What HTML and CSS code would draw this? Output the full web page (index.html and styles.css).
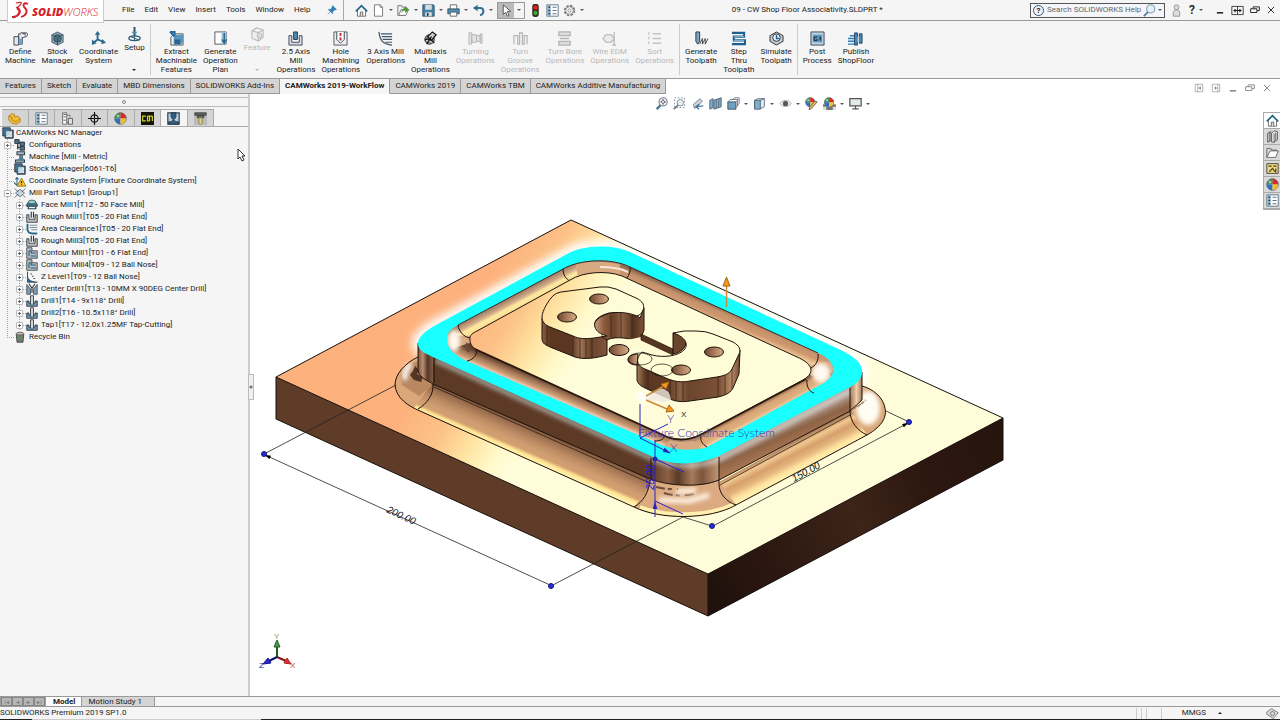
FILE: index.html
```html
<!DOCTYPE html>
<html lang="en">
<head>
  <meta charset="utf-8">
  <title>09 - CW Shop Floor Associativity.SLDPRT *</title>
  <link rel="stylesheet" href="styles.css">
</head>
<body>

<!-- icon sprite -->
<svg class="sprite" aria-hidden="true">
  <symbol id="i-home" viewBox="0 0 16 16"><path d="M3 8v7h10V8" fill="#fff" stroke="#555"/><path d="M1 9l7-7 7 7" fill="none" stroke="#1f6384" stroke-width="2"/><path d="M6.500 15v-5h3v5" fill="#ddd" stroke="#555"/></symbol>
  <symbol id="i-doc" viewBox="0 0 16 16"><path d="M3 1h7l3 3v11H3z" fill="#fff" stroke="#666"/><path d="M10 1v3h3" fill="none" stroke="#666"/></symbol>
  <symbol id="i-open" viewBox="0 0 16 16"><path d="M1 14V2h5l1 2h3v10z" fill="#eee" stroke="#666"/><path d="M2 14l3-7h9l-3 7z" fill="#fff" stroke="#666"/><path d="M5 11c1-4 3-6 5-6V2l5 5-5 4V8c-2 0-3 1-5 3z" fill="#4d9a34"/></symbol>
  <symbol id="i-save" viewBox="0 0 16 16"><path d="M1 1h13l1 1v13H1z" fill="#4482a5" stroke="#2c4a5c"/><path d="M4 1h8v6H4zM4 10h8v5H4z" fill="#d5dde1"/><path d="M6 11h2v4H6z" fill="#335"/></symbol>
  <symbol id="i-print" viewBox="0 0 16 16"><path d="M4 6V1h8v5" fill="#fff" stroke="#555"/><path d="M1 6h14v6H1z" fill="#4f8eb3" stroke="#2c4a5c"/><path d="M4 10h8v5H4z" fill="#fff" stroke="#555"/></symbol>
  <symbol id="i-undo" viewBox="0 0 16 16"><path d="M5 5h5c3 0 4 2 4 4s-1 4-4 5" fill="none" stroke="#356f96" stroke-width="2.500"/><path d="M1 5l6-4v8z" fill="#356f96"/></symbol>
  <symbol id="i-arrow" viewBox="0 0 16 16"><path d="M4 1v12l3-3 2 5 2-1-2-5h4z" fill="#fff" stroke="#444"/></symbol>
  <symbol id="i-traffic" viewBox="0 0 16 16"><rect x="4" y="0" width="8" height="16" rx="3" fill="#3b2620"/><circle cx="8" cy="4.500" r="2.700" fill="#d22"/><circle cx="8" cy="11" r="2.700" fill="#3a3"/></symbol>
  <symbol id="i-props" viewBox="0 0 16 16"><path d="M1 1h14v14H1z" fill="#fff" stroke="#4b6778"/><path d="M1 1h5v14H1z" fill="#9bb8c8"/><path d="M3 4h2M3 8h2M3 12h2" stroke="#245" stroke-width="2"/><path d="M8 4h5M8 8h5M8 12h5" stroke="#456"/></symbol>
  <symbol id="i-gear" viewBox="0 0 16 16"><circle cx="8" cy="8" r="6" fill="none" stroke="#777" stroke-width="2" stroke-dasharray="3 1.700"/><circle cx="8" cy="8" r="4.700" fill="#fff" stroke="#777"/><circle cx="8" cy="8" r="2" fill="#fff" stroke="#777"/></symbol>
  <symbol id="i-pin" viewBox="0 0 16 16"><path d="M9 1l6 6-2 1-2 0-2 3 0 3-7-7 3 0 3-2 0-2zM6 10l-5 5" fill="#2f7db5" stroke="#2f7db5"/></symbol>
  <symbol id="i-lens" viewBox="0 0 16 16"><circle cx="9.500" cy="6" r="5" fill="#e3f0fa" stroke="#5a8098"/><path d="M6 10l-5 5" stroke="#4f7a94" stroke-width="2"/></symbol>
  <symbol id="i-fit" viewBox="0 0 16 16"><path d="M7 10l-5 5" stroke="#4f7a94" stroke-width="3"/><circle cx="10" cy="6" r="5" fill="#f0f3f5" stroke="#556"/><path d="M10 2.500v7M6.500 6h7" stroke="#556"/><circle cx="10" cy="6" r="1.800" fill="#fff" stroke="#556"/></symbol>
  <symbol id="i-person" viewBox="0 0 16 16"><circle cx="8" cy="4" r="3" fill="#ddd" stroke="#888"/><path d="M4 15V11c0-5 8-5 8 0v4z" fill="#ddd" stroke="#888"/></symbol>
  <symbol id="i-min" viewBox="0 0 16 16"><path d="M3 12.500h10" stroke="currentColor" stroke-width="2.500"/></symbol>
  <symbol id="i-span" viewBox="0 0 16 16"><path d="M1 3h14v10H1zM8 3v10" fill="none" stroke="currentColor"/><path d="M3 8h10M5 6v4M11 6v4" stroke="currentColor" stroke-width="1.500"/></symbol>
  <symbol id="i-restore" viewBox="0 0 16 16"><path d="M5 6V3h10v6h-4M1 6h10v6H1z" fill="none" stroke="currentColor" stroke-width="1.500"/></symbol>
  <symbol id="i-close" viewBox="0 0 16 16"><path d="M3 3l10 10M13 3L3 13" stroke="currentColor" stroke-width="1.500"/></symbol>
  <symbol id="i-dockl" viewBox="0 0 16 16"><path d="M2 2h12v12H2zM6 2v12" fill="none" stroke="currentColor"/><path d="M11 5v6L7 8z" fill="currentColor"/></symbol>
  <symbol id="i-dockr" viewBox="0 0 16 16"><path d="M2 2h12v12H2zM11 2v12" fill="none" stroke="currentColor"/><path d="M6 5v6l4-3z" fill="currentColor"/></symbol>

  <symbol id="i-machine" viewBox="0 0 16 16"><path d="M1 6h5v9H1zM6 3h4v11H6z" fill="#dfe8ee" stroke="#445"/><path d="M8 2h6c2 0 2 3 0 4l-4 1M10 3h3v2" fill="#fff" stroke="#334"/><path d="M6 8h4v6H6z" fill="#6fa6c8"/></symbol>
  <symbol id="i-stock" viewBox="0 0 16 16"><path d="M8 1l6 3v8l-6 3-6-3V4z" fill="#8ba4b1" stroke="#4c6472"/><circle cx="8" cy="8" r="4" fill="#4f7286" stroke="#2e4757"/><path d="M2 4l6 3 6-3M8 7v8" fill="none" stroke="#35505f"/></symbol>
  <symbol id="i-coord" viewBox="0 0 16 16"><path d="M7 2v8M7 9l7 3M7 9l-5 4" stroke="#2d6a8f" stroke-width="2"/><path d="M4 4l3-4 3 4zM12 8.500l4 4-5 1.500zM1 9l0 6 5-2z" fill="#2d6a8f"/></symbol>
  <symbol id="i-setup" viewBox="0 0 16 16"><path d="M8 0v9" stroke="#345" stroke-width="2"/><path d="M5 5h6l-3 5z" fill="#4f8eb3"/><ellipse cx="8" cy="12" rx="6" ry="2.500" fill="none" stroke="#2d5a75" stroke-width="1.500"/><path d="M8 8v7M3 10l10 4" stroke="#2d5a75"/></symbol>
  <symbol id="i-extract" viewBox="0 0 16 16"><path d="M5 3h10v12H2V7z" fill="#eee" stroke="#555"/><path d="M5 7l3-3h7v8l-3 3H5z" fill="#5a95bc"/><path d="M1 1h5v5M6 6L1 1" fill="none" stroke="#2468a0" stroke-width="2"/><path d="M6 9h6v5H6z" fill="#2c6289"/></symbol>
  <symbol id="i-plan" viewBox="0 0 16 16"><path d="M2 1h12v13H2z" fill="#fff" stroke="#555"/><path d="M9 1h5v13H9z" fill="#9dc3dc"/><path d="M12 2v10M9.500 9l2.500 4 2.500-4" stroke="#246692" stroke-width="1.500" fill="none"/></symbol>
  <symbol id="i-feature" viewBox="0 0 16 16"><path d="M2 4l5-3 7 2v8l-5 4-7-3zM2 4l7 2 5-3M9 6v9" fill="#eee" stroke="#bbb" stroke-width="1.200"/><circle cx="10" cy="9" r="2.500" fill="#ddd" stroke="#bbb"/></symbol>
  <symbol id="i-mill" viewBox="0 0 16 16"><path d="M1 5v10h14V5h-3v7H4V5z" fill="#d3dde3" stroke="#445"/><path d="M6 1h4v8H6z" fill="#4f8eb3" stroke="#234"/></symbol>
  <symbol id="i-hole" viewBox="0 0 16 16"><path d="M1 1h14v14H1z" fill="#eee" stroke="#556"/><path d="M4 1v8l4 4 4-4V1" fill="#fff" stroke="#345"/><path d="M8 2v3M8 7v3" stroke="#c22" stroke-width="2"/></symbol>
  <symbol id="i-axis3" viewBox="0 0 16 16"><path d="M1 1v3c2 7 5 10 12 11h2V1z" fill="#f3f6f8"/><path d="M1 1c1 9 4 13 14 14M3 3h12M4 6h11M5 9h10M8 12h7" fill="none" stroke="#456" stroke-width="1.300"/></symbol>
  <symbol id="i-multi" viewBox="0 0 16 16"><circle cx="7" cy="9" r="5" fill="#999" stroke="#222"/><path d="M5 6l5-5 4 3-5 6zM2 10c3-3 8 0 10 3M4 14l5-8" fill="#ccc" stroke="#111" stroke-width="1.300"/></symbol>
  <symbol id="i-turn" viewBox="0 0 16 16"><path d="M1 2h3v12H1zM4 4h5v8H4zM9 5h4v6H9zM13 3h2v10h-2z" fill="#e4e4e4" stroke="#b4b4b4"/></symbol>
  <symbol id="i-groove" viewBox="0 0 16 16"><path d="M1 14V5h4v9h2V2h3v12h2V5h3v9" fill="none" stroke="#b4b4b4" stroke-width="1.300"/></symbol>
  <symbol id="i-bore" viewBox="0 0 16 16"><path d="M2 1h12v4H2zM2 11h12v4H2zM4 5h8M3 8h10" fill="#ddd" stroke="#b4b4b4" stroke-width="1.400"/></symbol>
  <symbol id="i-wire" viewBox="0 0 16 16"><path d="M1 8l3-4h6l3 4-3 4H4zM13 1v14M11 15h4" fill="#e9e9e9" stroke="#b4b4b4" stroke-width="1.200"/></symbol>
  <symbol id="i-sort" viewBox="0 0 16 16"><path d="M6 3h9M6 8h9M6 13h9" stroke="#c4c4c4" stroke-width="1.500"/><path d="M2 1v3M2 6v3M2 11v3" stroke="#b4b4b4"/></symbol>
  <symbol id="i-gentp" viewBox="0 0 16 16"><path d="M2 1h4v10l-2 3-2-3z" fill="#78a6c3" stroke="#334"/><path d="M6 14l3-6v6l3-6v6l3-6" fill="none" stroke="#444"/></symbol>
  <symbol id="i-step" viewBox="0 0 16 16"><path d="M1 2h13v4H3v4h12v4H1" fill="none" stroke="#1e5f93" stroke-width="2.200"/><path d="M3 6h11M3 10h11" stroke="#8cbedd"/></symbol>
  <symbol id="i-sim" viewBox="0 0 16 16"><path d="M8 1l7 4v6l-7 4-7-4V5z" fill="#bfc9cf" stroke="#333"/><circle cx="8" cy="7" r="4" fill="#e9f3f8" stroke="#333"/><path d="M8 4v4h3" fill="none" stroke="#1e5f93" stroke-width="1.500"/></symbol>
  <symbol id="i-post" viewBox="0 0 16 16"><path d="M1 1h14v14H1z" fill="#b9d2e0" stroke="#445"/><path d="M3 4h10v8H3z" fill="#5795bb"/><path d="M7.500 6.500h-3v3.500h3V8.500M10 7l1-.5V10" fill="none" stroke="#123"/></symbol>
  <symbol id="i-publish" viewBox="0 0 16 16"><path d="M0 8h7M0 11h7M0 14h7M2 5h5" stroke="#2d7fbd" stroke-width="1.500"/><path d="M7 2h3v13H7zM12 3h3v10h-3z" fill="#4889b5" stroke="#246"/><path d="M10 6h2v6h-2z" fill="#ccc"/></symbol>

  <symbol id="i-brush" viewBox="0 0 16 16"><path d="M3 9l8-7 3 3-6 7-4 2z" fill="#c9d2d8" stroke="#778"/><path d="M15 11l-8 1m3-3l-4 3 4 3" stroke="#39759b" stroke-width="1.500" fill="none"/></symbol>
  <symbol id="i-zoomarea" viewBox="0 0 16 16"><path d="M2 1h12v12H2z" fill="none" stroke="#777" stroke-dasharray="2 2"/><circle cx="9" cy="7" r="4" fill="#e9eff3" stroke="#68808f"/><path d="M6 10l-5 5" stroke="#68808f" stroke-width="2"/></symbol>
  <symbol id="i-section" viewBox="0 0 16 16"><path d="M1 4l4-2v11l-4 2zM6 4l9-3v11l-9 3z" fill="#82aec7" stroke="#456"/><path d="M9 3v11M12 2v11" stroke="#567"/></symbol>
  <symbol id="i-orient" viewBox="0 0 16 16"><path d="M6 4l3-3h6v7l-3 3" fill="#fff" stroke="#667"/><path d="M1 6h10v9H1z" fill="#6ca2c2" stroke="#345"/><path d="M1 6l3-3h9v8l-2 2M11 6l3-3" fill="none" stroke="#567"/></symbol>
  <symbol id="i-cube" viewBox="0 0 16 16"><path d="M2 4l4-2h8v10l-4 2H2z" fill="#dfe9ee" stroke="#567"/><path d="M2 4h7v11H2z" fill="#7fb0cc" stroke="#456"/><path d="M9 4l5-2" stroke="#456"/></symbol>
  <symbol id="i-eye" viewBox="0 0 16 16"><path d="M1 8c4-5 10-5 14 0-4 5-10 5-14 0z" fill="#f1f1f1" stroke="#999"/><circle cx="8" cy="8" r="3.200" fill="#555"/></symbol>
  <symbol id="i-ball" viewBox="0 0 16 16"><circle cx="8" cy="8" r="7" fill="#ddd" stroke="#444"/><path d="M8 8V1A7 7 0 0 0 1 8z" fill="#2f8a46"/><path d="M8 8V1a7 7 0 0 1 7 7z" fill="#d8282a"/><path d="M8 8H1a7 7 0 0 0 7 7z" fill="#2f6fc2"/><path d="M8 8h7a7 7 0 0 1-7 7z" fill="#edbd2b"/><circle cx="5" cy="5" r="2" fill="#fff" opacity=".5"/></symbol>
  <symbol id="i-edit" viewBox="0 0 16 16"><use href="#i-ball" width="13" height="13"/><path d="M15 6l-7 8-3 2 1-4 6-7z" fill="#e8c15c" stroke="#555"/></symbol>
  <symbol id="i-scene" viewBox="0 0 16 16"><path d="M0 9h16v7H0z" fill="#777"/><path d="M0 12h4v4H0zM12 12h4v4h-4zM4 9h4v3H4z" fill="#ddd"/><use href="#i-ball" x="1" width="13" height="13"/></symbol>
  <symbol id="i-monitor" viewBox="0 0 16 16"><path d="M1 2h14v9H1z" fill="#e3e8ea" stroke="#555" stroke-width="1.500"/><path d="M8 11v3M4 14.500h8" stroke="#555" stroke-width="1.500"/></symbol>

  <symbol id="i-part" viewBox="0 0 16 16"><path d="M1 5l4-3 3 1v3l4-1 3 3v4l-5 3-5-1-4-4z" fill="#f3bf3a" stroke="#a97a17"/><path d="M1 5l4 2v3l5 2 5-4" fill="none" stroke="#a97a17"/></symbol>
  <symbol id="i-config" viewBox="0 0 16 16"><path d="M2 1h5v14H2zM7 4h4v3M7 13h2" fill="#fff" stroke="#555"/><path d="M3 3h3M3 6h3M3 10h3" stroke="#333"/><rect x="9" y="8" width="5" height="7" fill="#dfe4e8" stroke="#555"/></symbol>
  <symbol id="i-target" viewBox="0 0 16 16"><circle cx="8" cy="8" r="4.500" fill="none" stroke="#111" stroke-width="1.400"/><path d="M8 0v16M0 8h16" stroke="#111" stroke-width="1.400"/></symbol>
  <symbol id="i-cw" viewBox="0 0 16 16"><path d="M0 0h16v16H0z" fill="#161608"/><path d="M6 5H2v6h4M8 5v6h2.500M10.500 5v6M14 11V5M8 5h6" fill="none" stroke="#cdd02c" stroke-width="1.500"/></symbol>
  <symbol id="i-nc" viewBox="0 0 16 16"><path d="M1 1h14v14H1z" fill="#b7d0e0" stroke="#345" stroke-width="1.500"/><path d="M5 1h6v5L9 9H7L5 6zM2 15v-3h3l2-2h2l2 2h3v3z" fill="#2f5f82" stroke="#234"/></symbol>
  <symbol id="i-tool" viewBox="0 0 16 16"><path d="M0 0h16v16H0z" fill="#bbb"/><path d="M1 1h14v3H1zM4 4h8v3H4z" fill="#666" stroke="#444"/><path d="M6 7h4v7l-2 2-2-2z" fill="#e4d46a" stroke="#775"/></symbol>

  <symbol id="t-root" viewBox="0 0 16 16"><path d="M1 1h10v3h4v11H4v-3H1z" fill="#3f7391" stroke="#223"/><path d="M5 5h9v9H5z" fill="#e6eff4" stroke="#345"/><path d="M6 12l6-6M6 9l3-3M9 13l4-4" stroke="#6fa0bb"/></symbol>
  <symbol id="t-conf" viewBox="0 0 16 16"><path d="M1 1h4v13M5 5h4M5 11h4" fill="none" stroke="#222" stroke-width="1.500"/><path d="M1 1h6v5H1zM8 4h6v5H8zM8 10h6v5H8z" fill="#4d7285" stroke="#223"/></symbol>
  <symbol id="t-mach" viewBox="0 0 16 16"><path d="M4 1h10v4H4zM8 5h3v5H8zM2 12h12v3H2z" fill="#a9bac4" stroke="#345" stroke-width="1.500"/><path d="M5 12l2-3h5l2 3z" fill="#4f7f9b"/></symbol>
  <symbol id="t-csys" viewBox="0 0 16 16"><path d="M4 14V3M4 3L2 6M4 3l2 3M4 14L0 10" fill="none" stroke="#346a8a" stroke-width="1.500"/><path d="M10 4l6 11H4z" fill="#f2c230" stroke="#8c6a10"/><path d="M10 8v3M10 12.500v1" stroke="#222" stroke-width="1.500"/></symbol>
  <symbol id="t-setup" viewBox="0 0 16 16"><path d="M8 3l6 5-6 5-6-5z" fill="#c8dbe6" stroke="#456"/><path d="M1 2l5 5M1 14l5-5M15 2l-5 5M15 14l-3-3" stroke="#345"/></symbol>
  <symbol id="t-face" viewBox="0 0 16 16"><path d="M2 5h12l1 5H1z" fill="#5e94b1" stroke="#245"/><ellipse cx="8" cy="4" rx="5" ry="2.500" fill="#9cc" stroke="#245"/><path d="M3 10v3h10v-3M0 8h16" fill="none" stroke="#245" stroke-width="1.500"/></symbol>
  <symbol id="t-rough" viewBox="0 0 16 16"><path d="M1 5v10h14V5h-3v6H4V5z" fill="#b9c0c4" stroke="#222"/><path d="M7 1v8M10 1v8" stroke="#234" stroke-width="1.500"/></symbol>
  <symbol id="t-area" viewBox="0 0 16 16"><path d="M2 1v7c0 5 3 6 7 6h6" fill="none" stroke="#2b698d" stroke-width="2.500"/><path d="M5 3h10M5 6h10M7 9h8" stroke="#567"/></symbol>
  <symbol id="t-contour" viewBox="0 0 16 16"><path d="M1 1h7v4h7v10H1z" fill="#b4c0c7" stroke="#333"/><path d="M4 5h3v3h6M4 12V5M6 12h8" fill="none" stroke="#2b5d79" stroke-width="1.500"/></symbol>
  <symbol id="t-z" viewBox="0 0 16 16"><path d="M2 1v6c1 5 4 7 13 8H2z" fill="#2b698d" stroke="#245"/><path d="M6 4h2M8 7h2M10 10h2" stroke="#345" stroke-width="1.500"/></symbol>
  <symbol id="t-cdrill" viewBox="0 0 16 16"><path d="M1 2l5 6v7H1zM15 2l-5 6v7h5z" fill="#7f9dae" stroke="#345"/><path d="M4 1l4 6 4-6M8 6v7" fill="none" stroke="#333" stroke-width="1.500"/></symbol>
  <symbol id="t-drill" viewBox="0 0 16 16"><path d="M1 8h3v3h8V8h3v7H1z" fill="#6f97ad" stroke="#123"/><path d="M6 1h4v11l-2 2-2-2z" fill="#cfd6da" stroke="#222"/></symbol>
  <symbol id="t-bin" viewBox="0 0 16 16"><path d="M3 4h10l-1 11H4z" fill="#777" stroke="#333"/><ellipse cx="8" cy="3.500" rx="5" ry="2" fill="#bbb" stroke="#444"/><path d="M5 8l3-2 1 4-3 2z" fill="#4d9b4d"/></symbol>

  <symbol id="i-library" viewBox="0 0 16 16"><path d="M2 4l4-2v11l-4 2zM7 4l3-3 4 1v10l-4 3H7z" fill="#f5f5f5" stroke="#444"/><path d="M4 3v11M10 4v11M12 3v10" stroke="#444"/></symbol>
  <symbol id="i-folder" viewBox="0 0 16 16"><path d="M1 14V3h5l1 2h6v2" fill="#ddd" stroke="#555"/><path d="M1 14l4-8h10l-3 8z" fill="#fff" stroke="#555"/></symbol>
  <symbol id="i-palette" viewBox="0 0 16 16"><path d="M1 2h14v12H1z" fill="#f0d77a" stroke="#333"/><path d="M3 5h4M9 5h4M4 12l4-4 3 4M12 8v5" stroke="#443" stroke-width="1.500" fill="none"/></symbol>
  <symbol id="i-tag" viewBox="0 0 16 16"><path d="M1 6l6-4 8 5-6 7-8-5z" fill="#ddd" stroke="#666"/><circle cx="8" cy="8" r="2.500" fill="none" stroke="#666"/></symbol>
</svg>

<header class="titlebar">
  <div class="logo">
    <svg class="logo-mark" viewBox="0 0 18 18" aria-hidden="true">
      <path d="M5 2c4-1 6-1 5 1-1 2-3 3-5 4 3-1 4 1 3 4-1 3-3 5-6 6" fill="none" stroke="#d4232b" stroke-width="1.200"/>
      <path d="M1 16c5 0 7-2 8-5 0-2-1-3-3-3M17 3c-4-2-6 1-3 4 3 3 2 7-4 9" fill="none" stroke="#d4232b" stroke-width="1.800"/>
    </svg>
    <span class="logo-text"><b>SOLID</b>WORKS</span>
  </div>
  <nav class="menu">
    <a href="#">File</a>
    <a href="#">Edit</a>
    <a href="#">View</a>
    <a href="#">Insert</a>
    <a href="#">Tools</a>
    <a href="#">Window</a>
    <a href="#">Help</a>
  </nav>
  <button class="pin" aria-label="Pin menu"><svg class="ico-s"><use href="#i-pin"/></svg></button>
  <div class="quick">
    <button aria-label="Home"><svg class="ico"><use href="#i-home"/></svg></button>
    <button class="drop" aria-label="New"><svg class="ico"><use href="#i-doc"/></svg></button>
    <button class="drop" aria-label="Open"><svg class="ico"><use href="#i-open"/></svg></button>
    <button class="drop" aria-label="Save"><svg class="ico"><use href="#i-save"/></svg></button>
    <button class="drop" aria-label="Print"><svg class="ico"><use href="#i-print"/></svg></button>
    <button class="drop" aria-label="Undo"><svg class="ico"><use href="#i-undo"/></svg></button>
    <button class="drop picked" aria-label="Select"><svg class="ico"><use href="#i-arrow"/></svg></button>
    <button aria-label="Rebuild"><svg class="ico"><use href="#i-traffic"/></svg></button>
    <button aria-label="File Properties"><svg class="ico"><use href="#i-props"/></svg></button>
    <button class="drop" aria-label="Options"><svg class="ico"><use href="#i-gear"/></svg></button>
  </div>
  <h1 class="doc-title">09 - CW Shop Floor Associativity.SLDPRT *</h1>
  <form class="search">
    <span class="help-dot">?</span>
    <input type="text" aria-label="Search help" placeholder="Search SOLIDWORKS Help">
    <button type="button" class="drop" aria-label="Search"><svg class="ico"><use href="#i-lens"/></svg></button>
  </form>
  <div class="window-tools">
    <button aria-label="Login"><svg class="ico"><use href="#i-person"/></svg></button>
    <button class="drop help">?</button>
    <button aria-label="Minimize"><svg class="ico-s"><use href="#i-min"/></svg></button>
    <button aria-label="Span displays"><svg class="ico"><use href="#i-span"/></svg></button>
    <button aria-label="Restore"><svg class="ico-s"><use href="#i-restore"/></svg></button>
    <button aria-label="Close"><svg class="ico-s"><use href="#i-close"/></svg></button>
  </div>
</header>

<div class="ribbon">
  <div class="group">
    <button><svg class="ico-l"><use href="#i-machine"/></svg>Define<br>Machine</button>
    <button><svg class="ico-l"><use href="#i-stock"/></svg>Stock<br>Manager</button>
    <button><svg class="ico-l"><use href="#i-coord"/></svg>Coordinate<br>System</button>
    <button class="split"><svg class="ico-l"><use href="#i-setup"/></svg>Setup</button>
  </div>
  <div class="group">
    <button><svg class="ico-l"><use href="#i-extract"/></svg>Extract<br>Machinable<br>Features</button>
    <button><svg class="ico-l"><use href="#i-plan"/></svg>Generate<br>Operation<br>Plan</button>
    <button class="split" disabled><svg class="ico-l"><use href="#i-feature"/></svg>Feature</button>
    <button><svg class="ico-l"><use href="#i-mill"/></svg>2.5 Axis<br>Mill<br>Operations</button>
    <button><svg class="ico-l"><use href="#i-hole"/></svg>Hole<br>Machining<br>Operations</button>
    <button><svg class="ico-l"><use href="#i-axis3"/></svg>3 Axis Mill<br>Operations</button>
    <button><svg class="ico-l"><use href="#i-multi"/></svg>Multiaxis<br>Mill<br>Operations</button>
    <button disabled><svg class="ico-l"><use href="#i-turn"/></svg>Turning<br>Operations</button>
    <button disabled><svg class="ico-l"><use href="#i-groove"/></svg>Turn<br>Groove<br>Operations</button>
    <button disabled><svg class="ico-l"><use href="#i-bore"/></svg>Turn Bore<br>Operations</button>
    <button disabled><svg class="ico-l"><use href="#i-wire"/></svg>Wire EDM<br>Operations</button>
    <button disabled><svg class="ico-l"><use href="#i-sort"/></svg>Sort<br>Operations</button>
  </div>
  <div class="group">
    <button><svg class="ico-l"><use href="#i-gentp"/></svg>Generate<br>Toolpath</button>
    <button><svg class="ico-l"><use href="#i-step"/></svg>Step<br>Thru<br>Toolpath</button>
    <button><svg class="ico-l"><use href="#i-sim"/></svg>Simulate<br>Toolpath</button>
  </div>
  <div class="group">
    <button><svg class="ico-l"><use href="#i-post"/></svg>Post<br>Process</button>
    <button><svg class="ico-l"><use href="#i-publish"/></svg>Publish<br>ShopFloor</button>
  </div>
</div>

<div class="tabrow">
  <nav class="tabs">
    <a href="#">Features</a>
    <a href="#">Sketch</a>
    <a href="#">Evaluate</a>
    <a href="#">MBD Dimensions</a>
    <a href="#">SOLIDWORKS Add-Ins</a>
    <a href="#" class="active">CAMWorks 2019-WorkFlow</a>
    <a href="#">CAMWorks 2019</a>
    <a href="#">CAMWorks TBM</a>
    <a href="#">CAMWorks Additive Manufacturing</a>
  </nav>
  <div class="doc-tools">
    <button aria-label="Dock left"><svg class="ico-s"><use href="#i-dockl"/></svg></button>
    <button aria-label="Dock right"><svg class="ico-s"><use href="#i-dockr"/></svg></button>
    <button aria-label="Minimize document"><svg class="ico-s"><use href="#i-min"/></svg></button>
    <button aria-label="Restore document"><svg class="ico-s"><use href="#i-restore"/></svg></button>
    <button aria-label="Close document"><svg class="ico-s"><use href="#i-close"/></svg></button>
  </div>
</div>

<main class="work">
  <aside class="panel">
    <div class="grip"><i></i></div>
    <div class="panel-tabs">
      <button aria-label="FeatureManager"><svg class="ico"><use href="#i-part"/></svg></button>
      <button aria-label="PropertyManager"><svg class="ico"><use href="#i-props"/></svg></button>
      <button aria-label="ConfigurationManager"><svg class="ico"><use href="#i-config"/></svg></button>
      <button aria-label="DimXpertManager"><svg class="ico"><use href="#i-target"/></svg></button>
      <button aria-label="DisplayManager"><svg class="ico"><use href="#i-ball"/></svg></button>
      <button aria-label="CAMWorks Feature Tree"><svg class="ico"><use href="#i-cw"/></svg></button>
      <button class="active" aria-label="CAMWorks Operation Tree"><svg class="ico"><use href="#i-nc"/></svg></button>
      <button aria-label="CAMWorks Tools Tree"><svg class="ico"><use href="#i-tool"/></svg></button>
    </div>

    <div class="root"><svg class="ico-t"><use href="#t-root"/></svg>CAMWorks NC Manager</div>
    <ul class="tree">
      <li><div class="row"><span class="twig"><button class="exp" aria-label="Expand"></button></span><svg class="ico-t"><use href="#t-conf"/></svg>Configurations</div></li>
      <li><div class="row"><span class="twig"></span><svg class="ico-t"><use href="#t-mach"/></svg>Machine [Mill - Metric]</div></li>
      <li><div class="row"><span class="twig"></span><svg class="ico-t"><use href="#t-root"/></svg>Stock Manager[6061-T6]</div></li>
      <li><div class="row"><span class="twig"></span><svg class="ico-t"><use href="#t-csys"/></svg>Coordinate System [Fixture Coordinate System]</div></li>
      <li>
        <div class="row"><span class="twig"><button class="exp open" aria-label="Collapse"></button></span><svg class="ico-t"><use href="#t-setup"/></svg>Mill Part Setup1 [Group1]</div>
        <ul>
          <li><div class="row"><span class="twig"><button class="exp" aria-label="Expand"></button></span><svg class="ico-t"><use href="#t-face"/></svg>Face Mill1[T12 - 50 Face Mill]</div></li>
          <li><div class="row"><span class="twig"><button class="exp" aria-label="Expand"></button></span><svg class="ico-t"><use href="#t-rough"/></svg>Rough Mill1[T05 - 20 Flat End]</div></li>
          <li><div class="row"><span class="twig"><button class="exp" aria-label="Expand"></button></span><svg class="ico-t"><use href="#t-area"/></svg>Area Clearance1[T05 - 20 Flat End]</div></li>
          <li><div class="row"><span class="twig"><button class="exp" aria-label="Expand"></button></span><svg class="ico-t"><use href="#t-rough"/></svg>Rough Mill3[T05 - 20 Flat End]</div></li>
          <li><div class="row"><span class="twig"><button class="exp" aria-label="Expand"></button></span><svg class="ico-t"><use href="#t-contour"/></svg>Contour Mill1[T01 - 6 Flat End]</div></li>
          <li><div class="row"><span class="twig"><button class="exp" aria-label="Expand"></button></span><svg class="ico-t"><use href="#t-contour"/></svg>Contour Mill4[T09 - 12 Ball Nose]</div></li>
          <li><div class="row"><span class="twig"><button class="exp" aria-label="Expand"></button></span><svg class="ico-t"><use href="#t-z"/></svg>Z Level1[T09 - 12 Ball Nose]</div></li>
          <li><div class="row"><span class="twig"><button class="exp" aria-label="Expand"></button></span><svg class="ico-t"><use href="#t-cdrill"/></svg>Center Drill1[T13 - 10MM X 90DEG Center Drill]</div></li>
          <li><div class="row"><span class="twig"><button class="exp" aria-label="Expand"></button></span><svg class="ico-t"><use href="#t-drill"/></svg>Drill1[T14 - 9x118° Drill]</div></li>
          <li><div class="row"><span class="twig"><button class="exp" aria-label="Expand"></button></span><svg class="ico-t"><use href="#t-drill"/></svg>Drill2[T16 - 10.5x118° Drill]</div></li>
          <li><div class="row"><span class="twig"><button class="exp" aria-label="Expand"></button></span><svg class="ico-t"><use href="#t-drill"/></svg>Tap1[T17 - 12.0x1.25MF Tap-Cutting]</div></li>
        </ul>
      </li>
      <li class="last"><div class="row"><span class="twig"></span><svg class="ico-t"><use href="#t-bin"/></svg>Recycle Bin</div></li>
    </ul>
    <svg class="pointer" viewBox="0 0 9 14" aria-hidden="true"><path d="M1 1v10l2-2 2 4 2-1-2-4h3z" fill="#fff" stroke="#333"/></svg>
    <button class="splitter" aria-label="Collapse panel"></button>
  </aside>

  <section class="viewport">
    <svg class="model" viewBox="250 94 1030 602" role="img" aria-label="Part model">
      <defs>
        <linearGradient id="g-top" gradientUnits="userSpaceOnUse" x1="470" y1="309" x2="570" y2="372">
          <stop offset="0" stop-color="#fdb27e"/><stop offset=".35" stop-color="#fcc287"/><stop offset=".6" stop-color="#ffe2a0"/><stop offset=".85" stop-color="#fff9ca"/><stop offset="1" stop-color="#fffdd9"/>
        </linearGradient>
        <linearGradient id="g-right" gradientUnits="userSpaceOnUse" x1="708" y1="590" x2="1003" y2="440">
          <stop offset="0" stop-color="#20110c"/><stop offset=".2" stop-color="#2c1710"/><stop offset=".5" stop-color="#3d2418"/><stop offset=".7" stop-color="#2e1911"/><stop offset="1" stop-color="#26140d"/>
        </linearGradient>
        <linearGradient id="g-skl" gradientUnits="userSpaceOnUse" x1="540" y1="430" x2="527" y2="460">
          <stop offset="0" stop-color="#74503a"/><stop offset=".12" stop-color="#96694a"/><stop offset=".4" stop-color="#bd8c64"/><stop offset=".6" stop-color="#cf9c70"/><stop offset=".75" stop-color="#d3a071"/><stop offset=".85" stop-color="#ffe391"/><stop offset="1" stop-color="#fff8bb"/>
        </linearGradient>
        <linearGradient id="g-skr" gradientUnits="userSpaceOnUse" x1="786" y1="445" x2="800" y2="472">
          <stop offset="0" stop-color="#a37452"/><stop offset=".2" stop-color="#f2c78f"/><stop offset=".4" stop-color="#d6a06e"/><stop offset=".6" stop-color="#e4b57d"/><stop offset=".8" stop-color="#ffe3a0"/><stop offset="1" stop-color="#fff4b6"/>
        </linearGradient>
        <linearGradient id="g-wallr" gradientUnits="userSpaceOnUse" x1="780" y1="424" x2="790" y2="446">
          <stop offset="0" stop-color="#b6a294"/><stop offset=".5" stop-color="#8d6346"/><stop offset="1" stop-color="#a97652"/>
        </linearGradient>
        <linearGradient id="g-corner" gradientUnits="userSpaceOnUse" x1="651" y1="0" x2="719" y2="0">
          <stop offset="0" stop-color="#5c3a25"/><stop offset=".25" stop-color="#8c6144"/><stop offset=".4" stop-color="#5a3926"/><stop offset=".6" stop-color="#a77a5b"/><stop offset=".75" stop-color="#7c553b"/><stop offset="1" stop-color="#c39773"/>
        </linearGradient>
        <linearGradient id="g-cl" gradientUnits="userSpaceOnUse" x1="418" y1="0" x2="434" y2="0">
          <stop offset="0" stop-color="#7d563c"/><stop offset=".3" stop-color="#b98e72"/><stop offset=".6" stop-color="#55382a"/><stop offset="1" stop-color="#8a6248"/>
        </linearGradient>
        <linearGradient id="g-cr" gradientUnits="userSpaceOnUse" x1="850" y1="0" x2="863" y2="0">
          <stop offset="0" stop-color="#9a6c4b"/><stop offset=".5" stop-color="#efcfab"/><stop offset="1" stop-color="#996a48"/>
        </linearGradient>
        <linearGradient id="g-in-ul" gradientUnits="userSpaceOnUse" x1="512" y1="296" x2="520" y2="311">
          <stop offset="0" stop-color="#9a7863"/><stop offset=".35" stop-color="#d2ab88"/><stop offset=".55" stop-color="#ffe9a0"/><stop offset="1" stop-color="#f7d78b"/>
        </linearGradient>
        <linearGradient id="g-in-ur" gradientUnits="userSpaceOnUse" x1="730" y1="311" x2="724" y2="325">
          <stop offset="0" stop-color="#84604b"/><stop offset=".3" stop-color="#c1906b"/><stop offset=".7" stop-color="#d09a6f"/><stop offset="1" stop-color="#edc493"/>
        </linearGradient>
        <linearGradient id="g-in-ll" gradientUnits="userSpaceOnUse" x1="570" y1="391" x2="564" y2="405">
          <stop offset="0" stop-color="#5b3d2b"/><stop offset=".3" stop-color="#9b7052"/><stop offset=".65" stop-color="#cf9d75"/><stop offset="1" stop-color="#fff0e6"/>
        </linearGradient>
        <linearGradient id="g-in-lr" gradientUnits="userSpaceOnUse" x1="752" y1="407" x2="760" y2="422">
          <stop offset="0" stop-color="#7d563b"/><stop offset=".25" stop-color="#d6a377"/><stop offset=".6" stop-color="#e0b07d"/><stop offset="1" stop-color="#fff3d5"/>
        </linearGradient>
        <linearGradient id="g-bite" gradientUnits="userSpaceOnUse" x1="594" y1="0" x2="644" y2="0">
          <stop offset="0" stop-color="#d0a283"/><stop offset=".2" stop-color="#8a5a3c"/><stop offset=".4" stop-color="#6b432b"/><stop offset=".55" stop-color="#8f6547"/><stop offset=".8" stop-color="#553220"/><stop offset="1" stop-color="#80563a"/>
        </linearGradient>
        <linearGradient id="g-isl" x1="0" x2="1">
          <stop offset="0" stop-color="#8d6144"/><stop offset=".12" stop-color="#5b3722"/><stop offset=".45" stop-color="#5b3722"/><stop offset=".6" stop-color="#9c7253"/><stop offset=".75" stop-color="#6a432b"/><stop offset="1" stop-color="#7d563c"/>
        </linearGradient>
        <linearGradient id="g-isr" x1="0" x2="1">
          <stop offset="0" stop-color="#a67b5a"/><stop offset=".08" stop-color="#5b3722"/><stop offset=".3" stop-color="#5f3b26"/><stop offset=".42" stop-color="#8c6244"/><stop offset=".5" stop-color="#6c452d"/><stop offset=".8" stop-color="#7b5236"/><stop offset=".92" stop-color="#b98d68"/><stop offset="1" stop-color="#6e4a33"/>
        </linearGradient>
        <linearGradient id="g-hole" x1="0" x2="1">
          <stop offset="0" stop-color="#6b442e"/><stop offset=".5" stop-color="#a77b5b"/><stop offset="1" stop-color="#d6ad89"/>
        </linearGradient>
        <filter id="f-glow" x="-10%" y="-10%" width="120%" height="120%"><feGaussianBlur stdDeviation="4"/></filter>
        <filter id="f-soft" x="-40%" y="-40%" width="180%" height="180%"><feGaussianBlur stdDeviation="2"/></filter>
        <marker id="m-arr" viewBox="0 0 10 6" refX="9" refY="3" markerWidth="8" markerHeight="5" orient="auto-start-reverse"><path d="M0 0l10 3-10 3z"/></marker>
        <marker id="m-blue" viewBox="0 0 10 6" refX="9" refY="3" markerWidth="8" markerHeight="5" orient="auto-start-reverse"><path d="M0 0l10 3-10 3z" fill="#2a24c4"/></marker>
        <path id="ring-out" d="M418 343C419 333 436 325 447 319L567 254C580 246 610 243 630 252L830 345C848 353 861 360 862 370C863 379 856 384 850 387L723 454C700 466 672 466 653 457L433 357C424 353 418 350 418 343z"/>
        <path id="ring-in" d="M447 339C447 332 452 328 458 325L563 269C578 260 610 257 630 267L818 353C834 360 839 373 825 382L707 447C690 452 670 450 655 442L467 361C456 356 447 349 447 339z"/>
        <clipPath id="c-in"><use href="#ring-in"/></clipPath>
      </defs>

      <!-- base block -->
      <path d="M571 220L1003 418L708 574L276 377z" fill="url(#g-top)"/>
      <path d="M276 377L708 574V616L276 419z" fill="#5e3c27"/>
      <path d="M708 574L1003 418V460L708 616z" fill="url(#g-right)"/>

      <!-- fillet skirt -->
      <path d="M418 357C405 363 395 374 395 385C396 398 408 406 420 411L634 507C660 520 710 520 736 505L867 435C883 426 887 416 885 408C883 397 873 389 862 386L850 411L719 484L651 480L433 384z" fill="#d9a778"/>
      <path d="M433 382L658 478L634 507L414 408z" fill="url(#g-skl)"/>
      <path d="M719 482L851 410L867 435L736 505z" fill="url(#g-skr)"/>
      <path d="M650 478C668 486 700 488 719 481L736 505C710 519 660 518 634 507C644 500 648 490 650 478z" fill="#dcaa80"/>
      <path d="M640 507C665 517 708 517 734 504" fill="none" stroke="#fff0ae" stroke-width="4"/>
      <path d="M656 487l10 2 12 0M664 493c8 3 20 3 30 1" fill="none" stroke="#6c4c38" stroke-width="2" stroke-dasharray="9 3 4 5"/>
      <path d="M659 500l30 1 20-6M676 492l20-2" fill="none" stroke="#fff5e8" stroke-width="5" filter="url(#f-soft)"/>
      <path d="M418 361C405 366 400 376 402 385L419 396L432 386L419 372z" fill="#b98861"/>
      <path d="M411 364c-4 4-7 10-6 16" fill="none" stroke="#fff" stroke-width="5" filter="url(#f-soft)"/>
      <path d="M415 366l4 4-2 4 6 3-2 5-7-2-4-5 3-4z" fill="#553626"/>
      <ellipse cx="868" cy="408" rx="12" ry="17" fill="#fffdf4" filter="url(#f-soft)"/>
      <path d="M853 409l7-4 6-5" stroke="#c0926a" stroke-width="2" stroke-dasharray="3 2"/>

      <!-- glow behind the selected face -->
      <use href="#ring-out" fill="none" stroke="#fff" stroke-width="12" filter="url(#f-glow)"/>

      <!-- boss walls -->
      <path d="M433 355L653 455V480L433 384z" fill="#5c3a25"/>
      <path d="M418 342V371C420 377 428 381 433 384V355z" fill="url(#g-cl)"/>
      <path d="M718 454L850 386V411L718 481z" fill="url(#g-wallr)"/>
      <path d="M850 386L862 372V400L850 411z" fill="url(#g-cr)"/>
      <path d="M651 455V479C668 486 700 488 719 481V454z" fill="url(#g-corner)"/>
      <path d="M435 360L653 459C672 468 700 468 722 458L851 391" fill="none" stroke="#e8f8ff" stroke-width="5" opacity=".5" filter="url(#f-soft)"/>
      <g fill="none" stroke="#1d120b">
        <path d="M418 343V371C420 378 428 381 433 384L650 479C668 486 700 488 719 480L850 411L862 400V372"/>
        <path d="M434 358V383M651 458V480M719 457V484M850 388V411"/>
        <path d="M434 387L652 484M720 485L850 415" stroke-width=".7"/>
        <path d="M418 357C405 363 395 374 395 385C396 398 408 406 420 411L634 507C660 520 710 520 736 505L867 435C883 426 887 416 885 408C883 397 873 389 862 386"/>
        <path d="M433 384C434 394 427 404 418 409M650 480C649 492 643 502 634 507M719 484C719 494 727 502 736 505M850 411C850 422 858 431 867 435"/>
      </g>

      <!-- selected face and pocket -->
      <use href="#ring-out" fill="#18ffff"/>
      <use href="#ring-in" fill="#d9aa82"/>
      <g clip-path="url(#c-in)">
        <path d="M440 335L575 262L578 277L472 336z" fill="url(#g-in-ul)"/>
        <path d="M620 262L835 360L808 366L620 275z" fill="url(#g-in-ur)"/>
        <path d="M440 352L470 343L672 438L660 450z" fill="url(#g-in-ll)"/>
        <path d="M690 438L808 374L832 384L705 452z" fill="url(#g-in-lr)"/>
        <path d="M563 267c20-9 48-9 70 0M663 436c12 6 28 6 40-1" fill="none" stroke="#a98570" stroke-width="3"/>
        <path d="M600 267c12 0 20 1 28 5" fill="none" stroke="#f9e6d8" stroke-width="2"/>
        <ellipse cx="454" cy="341" rx="6" ry="11" fill="#fff7ee" filter="url(#f-soft)"/>
        <path d="M467 342l4 8-3 3-4-6z" fill="#6b4a35"/>
        <ellipse cx="821" cy="373" rx="9" ry="10" fill="#fffaf2" filter="url(#f-soft)"/>
        <path d="M822 356c12 5 15 13 8 20" fill="none" stroke="#b79a85" stroke-width="2" stroke-dasharray="5 2"/>
      </g>
      <g fill="none" stroke="#1d120b">
        <path d="M458 325L563 269C578 260 610 257 630 267L818 353" stroke-width=".8"/>
        <path d="M563 269C563 275 566 279 570 281M630 267C631 272 628 277 626 279M458 325C459 332 464 337 470 338M467 361C474 360 478 353 476 350M818 354C819 361 815 366 811 368M807 380C806 387 810 392 814 393M655 441C662 441 665 438 664 435M707 447C702 444 700 440 701 436"/>
      </g>
      <path d="M470 340C469 335 473 333 477 331L570 280C583 272 606 270 622 276L797 357C811 363 817 372 803 380L700 435C688 441 674 441 663 435L477 350C472 347 470 344 470 340z" fill="url(#g-top)" stroke="#1d120b"/>
      <path d="M475 349L663 435C674 441 688 441 700 435L806 379" fill="none" stroke="#2c1a10" stroke-width="1.800"/>

      <!-- left island -->
      <path d="M542 318V338C542 344 546 345 550 347L575 357C585 360 596 358 607 355V336z" fill="url(#g-isl)" stroke="#1d120b"/>
      <path d="M594 325C596 316 610 312 620 312C630 312 636 314 640 318L644 308V330L641 338L633 340C624 337 612 337 607 340C600 336 594 332 594 325z" fill="url(#g-bite)" stroke="#1d120b"/>
      <path d="M608 341L632 339L641 337L672 352V357L650 353L628 345z" fill="#fffad2"/>
      <path d="M641 334L673 349V355L641 340z" fill="#573522" stroke="#1d120b" stroke-width=".7"/>
      <path d="M542 317C542 311 549 299 554 295Q556 293 561 292L600 287Q608 286 616 289L636 298C643 301 645 306 643 310C642 313 640 315 637 316C628 312 616 312 609 313C598 316 593 321 595 327C596 331 600 334 607 336L594 338C585 339 579 339 573 336L550 327C545 325 542 322 542 317z" fill="url(#g-top)" stroke="#1d120b"/>
      <path d="M547 325V345M573 337V356M580 339V358M586 339V359M592 339V358M602 334V337M611 315V337M621 313V337M632 315V338" stroke="#301d12" stroke-width=".7"/>

      <!-- right island -->
      <path d="M637 360V380C638 385 643 387 647 389L670 399C677 402 683 402 690 401L718 397C727 395 731 392 733 388L739 374L740 350z" fill="url(#g-isr)" stroke="#1d120b"/>
      <path d="M673 333V354C680 353 686 348 686 342C686 338 680 335 673 333z" fill="#6b442c" stroke="#1d120b"/>
      <path d="M673 333Q684 330 696 331Q706 331 713 334L733 342C740 346 741 350 739 354L732 369C729 375 722 376 717 377L690 381C680 383 674 381 668 379L645 369C638 366 634 360 642 352L652 355C664 358 678 356 684 350C690 343 683 336 673 333z" fill="#fffdd6" stroke="#1d120b"/>
      <path d="M648 370V389M670 380V399M676 382V401M683 382V402M718 377V397M725 375V395M732 369V389" stroke="#301d12" stroke-width=".7"/>
      <g stroke="#1d120b" fill="url(#g-hole)">
        <ellipse cx="599" cy="299" rx="9.500" ry="5"/>
        <ellipse cx="567" cy="317" rx="9.500" ry="5"/>
        <ellipse cx="619" cy="350" rx="10" ry="5.500"/>
        <ellipse cx="714" cy="352" rx="9.500" ry="5"/>
        <ellipse cx="681" cy="370" rx="9.500" ry="5"/>
        <path d="M638 354c-6 0-10 3-10 6 0 3 4 5 9 5z"/>
        <ellipse cx="640" cy="359" rx="12" ry="6" fill="none" stroke-width=".7"/>
        <ellipse cx="662" cy="370" rx="11" ry="6" fill="none" stroke-width=".7"/>
      </g>

      <!-- block edges -->
      <path d="M571 220L1003 418L708 574L276 377zM276 377V419L708 616V574M708 616L1003 460V418" fill="none" stroke="#16100c"/>

      <!-- dimensions -->
      <g stroke="#222" stroke-width=".8" fill="none">
        <path d="M264 454L396 385M551 586L683 517L712 526M886 411L909 422"/>
        <path d="M265 455L550 585M713 526L908 423" marker-start="url(#m-arr)" marker-end="url(#m-arr)"/>
      </g>
      <g fill="#2a28d8" stroke="#111a80"><circle cx="264" cy="454" r="2.500"/><circle cx="551" cy="586" r="2.500"/><circle cx="712" cy="526" r="2.500"/><circle cx="909" cy="422" r="2.500"/><circle cx="655" cy="459" r="2"/></g>
      <text class="dim" transform="translate(386 512) rotate(25)">200.00</text>
      <text class="dim" transform="translate(794 482) rotate(-28)">150.00</text>
      <g stroke="#2a24c4" fill="none">
        <path d="M655 440V457M655 517V502" marker-end="url(#m-blue)"/>
        <path d="M655 459V502M655 459L684 472M655 501L683 514"/>
        <path d="M640 437V404M640 438L668 424M640 438L670 453" marker-end="url(#m-blue)"/>
      </g>
      <text class="dim blue" transform="translate(654 490) rotate(-90)">25.00</text>

      <!-- csys markers -->
      <path d="M640 399L660 388Q670 389 671 400L664 402z" fill="#eee7e0" opacity=".8"/>
      <ellipse cx="642" cy="397" rx="6" ry="5" fill="#fff" filter="url(#f-soft)"/>
      <g stroke="#a8660e" fill="#f59a1e">
        <path d="M646 396L664 386M646 400L667 409M726.500 307V286" stroke="#c98a3c" stroke-width="1.500"/>
        <path d="M669 382L666 389L661 384zM674 411L666 412L669 405zM726.500 277L730 286H723z"/>
      </g>
      <text class="csys" x="638" y="437">Fixture Coordinate System</text>
      <text class="csys" x="667" y="423">Y</text>
      <text class="csys" x="670" y="452">X</text>
      <text class="axis" x="681" y="417">X</text>

      <!-- view triad -->
      <path d="M277 657V645" stroke="#1c5c1c" stroke-width="2"/><path d="M277 640l3 7h-6z" fill="#4c9b4c" stroke="#245c24"/>
      <path d="M277 657l9 4" stroke="#7c1414" stroke-width="2"/><path d="M291 664l-7-1 3-5z" fill="#e03030" stroke="#a22"/>
      <path d="M277 657l-8 4" stroke="#11116b" stroke-width="2"/><path d="M263 664l5-6 3 5z" fill="#2828d8" stroke="#118"/>
      <text class="axis green" x="274" y="639">Y</text>
      <text class="axis red" x="290" y="668">X</text>
      <text class="axis navy" x="259" y="668">Z</text>
    </svg>

    <div class="view-tools">
      <button aria-label="Zoom to fit"><svg class="ico"><use href="#i-fit"/></svg></button>
      <button aria-label="Zoom to area"><svg class="ico"><use href="#i-zoomarea"/></svg></button>
      <button aria-label="Previous view"><svg class="ico"><use href="#i-brush"/></svg></button>
      <button aria-label="Section view"><svg class="ico"><use href="#i-section"/></svg></button>
      <button class="drop" aria-label="View orientation"><svg class="ico"><use href="#i-orient"/></svg></button>
      <button class="drop" aria-label="Display style"><svg class="ico"><use href="#i-cube"/></svg></button>
      <button class="drop" aria-label="Hide or show items"><svg class="ico"><use href="#i-eye"/></svg></button>
      <button aria-label="Edit appearance"><svg class="ico"><use href="#i-edit"/></svg></button>
      <button class="drop" aria-label="Apply scene"><svg class="ico"><use href="#i-scene"/></svg></button>
      <button class="drop" aria-label="View settings"><svg class="ico"><use href="#i-monitor"/></svg></button>
    </div>

    <div class="task-pane">
      <button class="on" aria-label="Resources"><svg class="ico"><use href="#i-home"/></svg></button>
      <button aria-label="Design Library"><svg class="ico"><use href="#i-library"/></svg></button>
      <button aria-label="File Explorer"><svg class="ico"><use href="#i-folder"/></svg></button>
      <button aria-label="View Palette"><svg class="ico"><use href="#i-palette"/></svg></button>
      <button aria-label="Appearances"><svg class="ico"><use href="#i-ball"/></svg></button>
      <button aria-label="Custom Properties"><svg class="ico"><use href="#i-props"/></svg></button>
    </div>
  </section>
</main>

<nav class="sheets">
  <div class="pager">
    <button aria-label="First">|◂</button><button aria-label="Previous">◂</button><button aria-label="Next">▸</button><button aria-label="Last">▸|</button>
  </div>
  <a href="#" class="active">Model</a>
  <a href="#">Motion Study 1</a>
</nav>

<footer class="status">
  <span class="version">SOLIDWORKS Premium 2019 SP1.0</span>
  <i class="cell"></i><i class="cell"></i><i class="cell wide"></i>
  <button class="units">MMGS</button>
  <svg class="ico"><use href="#i-tag"/></svg>
</footer>
<div class="edge"></div>

</body>
</html>
```

FILE: styles.css
```css
* {
  box-sizing: border-box;
}
body {
  margin: 0;
  min-height: 100vh;
  display: flex;
  flex-direction: column;
  font: 8px/12px Roboto, "Open Sans", sans-serif;
  color: #222;
  background: #f5f5f5;
}
button {
  margin: 0;
  padding: 0;
  border: 0;
  background: none;
  font: inherit;
  color: inherit;
  cursor: pointer;
}
button:disabled {
  color: #b8b8b8;
}
a {
  color: inherit;
  text-decoration: none;
}
svg {
  display: block;
  flex: none;
}
.sprite {
  position: absolute;
  width: 0;
  height: 0;
}
.ico {
  width: 13px;
  height: 13px;
}
.ico-s {
  width: 10px;
  height: 10px;
}
.ico-l {
  width: 15px;
  height: 15px;
}
.ico-t {
  width: 12px;
  height: 12px;
}

/* small caret after a button */
.drop {
  display: flex;
  align-items: center;
  gap: 4px;
}
.drop::after {
  content: "";
  border: 2px solid transparent;
  border-top-color: #555;
  border-bottom: 0;
}

/* title bar */
.titlebar {
  display: flex;
  align-items: center;
  height: 21px;
  border-bottom: 1px solid #999;
}
.logo {
  align-self: flex-start;
  display: flex;
  align-items: center;
  gap: 3px;
  width: 97px;
  height: 23px;
  margin-left: 7px;
  padding: 0 0 3px 3px;
  background: #fff;
  border: 1px solid #ccc;
  border-top: 0;
  position: relative;
  z-index: 1;
}
.logo-mark {
  width: 18px;
  height: 18px;
}
.logo-text {
  font: italic 300 11px/18px "Open Sans", sans-serif;
  color: #d4232b;
  padding-top: 4px;
}
.logo-text b {
  font-weight: 800;
}
.menu {
  display: flex;
  gap: 10px;
  margin-left: 18px;
}
.pin {
  margin: 0 6px 0 17px;
}
.quick {
  display: flex;
  align-items: center;
  align-self: stretch;
  gap: 4px;
  padding-left: 11px;
  border-left: 1px solid #aaa;
}
.quick .picked {
  height: 17px;
  padding: 0 3px 0 2px;
  border: 1px solid #999;
  background: linear-gradient(90deg, #bbb 16px, #f5f5f5 16px);
}
.doc-title {
  margin: 0 auto;
  font-size: 8px;
  font-weight: 400;
}
.search {
  display: flex;
  align-items: center;
  width: 135px;
  height: 15px;
  padding: 0 2px;
  border: 1px solid #555;
  background: #f4f6fa;
}
.search input {
  flex: 1;
  min-width: 0;
  padding: 0 0 0 3px;
  border: 0;
  background: none;
  font: inherit;
}
.search input::placeholder {
  color: #666;
}
.search .drop {
  gap: 2px;
}
.help-dot {
  width: 11px;
  height: 11px;
  border: 1px solid #357;
  border-radius: 50%;
  text-align: center;
  font-weight: 700;
  line-height: 9px;
}
.window-tools {
  display: flex;
  align-items: center;
  gap: 6px;
  padding: 0 4px 0 5px;
}
.help {
  margin-right: 6px;
  font-size: 12px;
  font-weight: 600;
}

/* ribbon */
.ribbon {
  display: flex;
  height: 58px;
  padding: 3px 0;
  border-bottom: 1px solid #999;
}
.group {
  display: flex;
  align-items: flex-start;
  gap: 6px;
  padding: 0 5px;
  border-right: 1px solid #ccc;
}
.group:last-child {
  border-right: 0;
}
.group button {
  line-height: 9px;
  padding-top: 7px;
  text-align: center;
}
.group .ico-l {
  margin: 0 auto 1px;
}
.group .split {
  position: relative;
  padding-top: 3px;
  padding-bottom: 20px;
}
.split::after {
  content: "";
  position: absolute;
  left: calc(50% - 2px);
  bottom: 1px;
  border: 2px solid transparent;
  border-top-color: currentColor;
  border-bottom: 0;
}

/* command tabs */
.tabrow {
  display: flex;
  justify-content: space-between;
  background: #fff;
}
.tabs {
  display: flex;
}
.tabs a {
  height: 15px;
  padding: 1px 5px 0;
  border-right: 1px solid #999;
  border-bottom: 1px solid #999;
  background: #d4d4d4;
}
.tabs .active {
  border-bottom-color: #f5f5f5;
  background: #f5f5f5;
  font-weight: 700;
}
.doc-tools {
  display: flex;
  align-items: center;
  gap: 7px;
  padding: 3px 8px 0;
  color: #888;
}

/* manager panel */
.work {
  flex: 1;
  display: flex;
}
.panel {
  position: relative;
  width: 250px;
  border-right: 2px solid #ccc;
}
.grip {
  display: flex;
  align-items: center;
  justify-content: center;
  height: 10px;
  margin-top: 3px;
  border-top: 1px solid #bbb;
  border-bottom: 1px solid #bbb;
}
.grip i {
  width: 4px;
  height: 4px;
  border: 1px solid #888;
  border-radius: 50%;
}
.panel-tabs {
  display: flex;
  margin-top: 2px;
  padding: 0 34px 0 2px;
  border-bottom: 1px solid #aaa;
}
.panel-tabs button {
  flex: 1;
  display: flex;
  justify-content: center;
  align-items: center;
  height: 17px;
  border: 1px solid #aaa;
  border-left: 0;
  border-bottom: 0;
  background: #d4d4d4;
}
.panel-tabs .active {
  background: #f5f5f5;
}
.root {
  display: flex;
  gap: 2px;
  padding-left: 2px;
}
.tree,
.tree ul {
  margin: 0;
  padding: 0;
  list-style: none;
}
.tree {
  padding-left: 1px;
}
.tree ul {
  padding-left: 12px;
  background: repeating-linear-gradient(#aaa 0 1px, transparent 1px 2px) 6px 0 / 1px 100% no-repeat;
}
.row {
  display: flex;
  align-items: center;
  height: 12px;
  white-space: nowrap;
}
.row .ico-t {
  margin-right: 3px;
}
.twig {
  width: 13px;
  height: 12px;
  padding: 3px;
  background:
    repeating-linear-gradient(#aaa 0 1px, transparent 1px 2px) 6px 0 / 1px 100% no-repeat,
    repeating-linear-gradient(90deg, #aaa 0 1px, transparent 1px 2px) 6px 6px / 7px 1px no-repeat;
}
.last .twig {
  background-size: 1px 6px, 7px 1px;
}
.exp {
  display: block;
  width: 7px;
  height: 7px;
  border: 1px solid #bbb;
  border-radius: 1px;
  background:
    linear-gradient(#567, #567) 1px 2px / 3px 1px no-repeat,
    linear-gradient(#567, #567) 2px 1px / 1px 3px no-repeat,
    #fff;
}
.exp.open {
  background: linear-gradient(#567, #567) 1px 2px / 3px 1px no-repeat, #fff;
}
.pointer {
  position: absolute;
  top: 54px;
  left: 237px;
  width: 9px;
  height: 14px;
}
.splitter {
  position: absolute;
  z-index: 1;
  top: 280px;
  right: -6px;
  width: 6px;
  height: 26px;
  border: 1px solid #bbb;
  background: radial-gradient(circle, #777 1px, #f0f0f0 2px);
}

/* graphics area */
.viewport {
  flex: 1;
  display: flex;
  min-width: 0;
  position: relative;
  background: #fff;
}
.model {
  flex: 1;
  width: 100%;
  min-width: 0;
}
.dim {
  font: italic 10px "Liberation Sans", sans-serif;
  fill: #111;
}
.csys {
  font: 300 12px Lato, sans-serif;
  fill: #4037b8;
}
.axis {
  font: 8px "Liberation Sans", sans-serif;
  fill: #222;
}
.blue {
  fill: #2018e0;
}
.green {
  fill: #7a9c7a;
}
.red {
  fill: #c44;
}
.navy {
  fill: #229;
}
.view-tools {
  position: absolute;
  top: 3px;
  left: 0;
  right: 5px;
  display: flex;
  align-items: center;
  justify-content: center;
  gap: 5px;
}
.task-pane {
  position: absolute;
  top: 18px;
  right: 0;
  display: flex;
  flex-direction: column;
  border: 1px solid #aaa;
  border-right: 0;
}
.task-pane button {
  display: flex;
  align-items: center;
  justify-content: center;
  width: 16px;
  height: 16px;
  border-bottom: 1px solid #aaa;
  background: #d9d9d9;
}
.task-pane .on {
  background: #fff;
}

/* bottom tabs and status bar */
.sheets {
  display: flex;
  height: 11px;
  line-height: 9px;
  border-top: 1px solid #999;
  border-bottom: 1px solid #999;
}
.pager {
  display: flex;
  background: #999;
  padding: 0 1px;
}
.pager button {
  width: 11px;
  border: 1px solid #888;
  background: #b5b5b5;
  color: #777;
  font-size: 6px;
  line-height: 7px;
}
.sheets a {
  padding: 0 12px 0 6px;
  background: #d4d4d4;
  border-right: 1px solid #999;
}
.sheets .active {
  padding: 0 6px 0 7px;
  background: #fff;
  font-weight: 700;
}
.status {
  display: flex;
  align-items: center;
  height: 12px;
  padding-right: 1px;
}
.version {
  flex: 1;
}
.cell {
  width: 5px;
  height: 11px;
  border-left: 1px solid #ccc;
}
.cell.wide {
  width: 16px;
  border-right: 1px solid #ccc;
}
.units {
  display: flex;
  align-items: center;
  gap: 12px;
  margin: 0 44px 0 20px;
}
.units::after {
  content: "";
  border: 2px solid transparent;
  border-bottom-color: #222;
  border-top: 0;
}
.edge {
  height: 1px;
  background: linear-gradient(90deg, #222 32px, #ccc 32px 261px, #222 261px);
}
```
